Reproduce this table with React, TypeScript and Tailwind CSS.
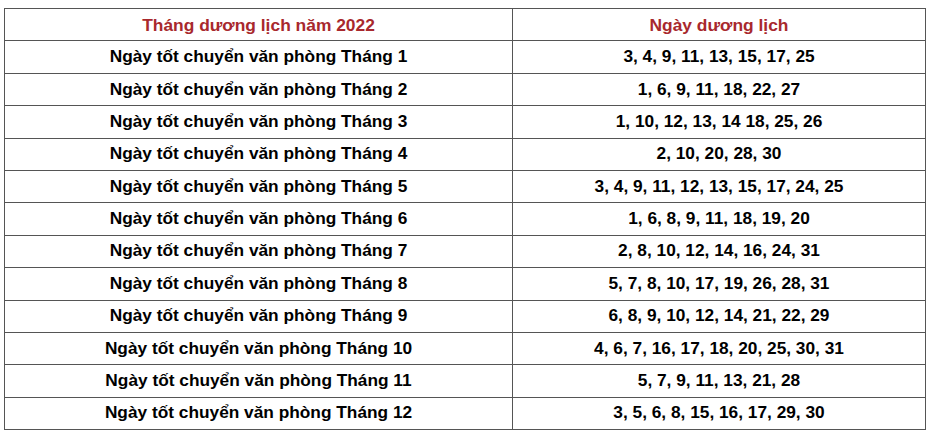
import React from "react";

const rows: [string, string][] = [
  ["Ngày tốt chuyển văn phòng Tháng 1", "3, 4, 9, 11, 13, 15, 17, 25"],
  ["Ngày tốt chuyển văn phòng Tháng 2", "1, 6, 9, 11, 18, 22, 27"],
  ["Ngày tốt chuyển văn phòng Tháng 3", "1, 10, 12, 13, 14 18, 25, 26"],
  ["Ngày tốt chuyển văn phòng Tháng 4", "2, 10, 20, 28, 30"],
  ["Ngày tốt chuyển văn phòng Tháng 5", "3, 4, 9, 11, 12, 13, 15, 17, 24, 25"],
  ["Ngày tốt chuyển văn phòng Tháng 6", "1, 6, 8, 9, 11, 18, 19, 20"],
  ["Ngày tốt chuyển văn phòng Tháng 7", "2, 8, 10, 12, 14, 16, 24, 31"],
  ["Ngày tốt chuyển văn phòng Tháng 8", "5, 7, 8, 10, 17, 19, 26, 28, 31"],
  ["Ngày tốt chuyển văn phòng Tháng 9", "6, 8, 9, 10, 12, 14, 21, 22, 29"],
  ["Ngày tốt chuyển văn phòng Tháng 10", "4, 6, 7, 16, 17, 18, 20, 25, 30, 31"],
  ["Ngày tốt chuyển văn phòng Tháng 11", "5, 7, 9, 11, 13, 21, 28"],
  ["Ngày tốt chuyển văn phòng Tháng 12", "3, 5, 6, 8, 15, 16, 17, 29, 30"],
];

export default function App() {
  return (
    <div className="w-[927px] h-[435px] bg-white pt-[8px] pl-[4px] font-['Liberation_Sans',Arial,sans-serif]">
      <table className="border-collapse w-[921px] table-fixed">
        <colgroup>
          <col className="w-[508px]" />
          <col className="w-[413px]" />
        </colgroup>
        <thead>
          <tr className="h-[32.4px]">
            <th className="border border-[#555] text-center text-[17.4px] font-bold text-[#a8282d] p-0">
              Tháng dương lịch năm 2022
            </th>
            <th className="border border-[#555] text-center text-[17.4px] font-bold text-[#a8282d] p-0">
              Ngày dương lịch
            </th>
          </tr>
        </thead>
        <tbody>
          {rows.map(([a, b]) => (
            <tr key={a} className="h-[32.4px]">
              <td className="border border-[#555] text-center text-[17.3px] font-bold text-black p-0">{a}</td>
              <td className="border border-[#555] text-center text-[17.3px] font-bold text-black p-0">{b}</td>
            </tr>
          ))}
        </tbody>
      </table>
    </div>
  );
}
